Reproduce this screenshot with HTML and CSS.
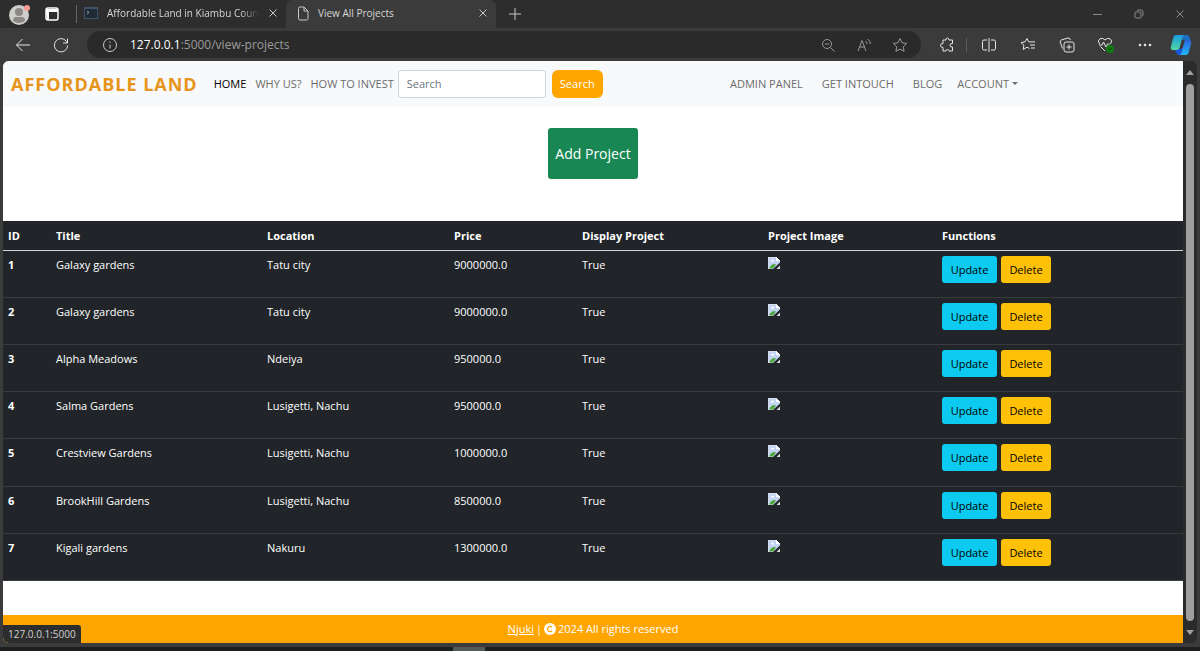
FILE: index.html
```html
<!DOCTYPE html>
<html lang="en">
<head>
    <meta charset="UTF-8">
    <title>View All Projects</title>
    <link rel="stylesheet" href="styles.css">
</head>
<body>
    <!-- shared shapes -->
    <svg class="defs" width="0" height="0">
        <symbol id="broken" viewBox="0 0 12 12">
            <path d="M0 0h8l4 4v8H0z" fill="#c3d3f3"/>
            <path d="M0 0h8l4 4v8H0z" fill="none" stroke="#e8e8e8"/>
            <path d="M8 0v4h4z" fill="#fff"/>
            <path d="M3 3.500q1.500-2 3 0v1H3z" fill="#fff"/>
            <path d="M1 11.500q3-6 7-4l-3 4z" fill="#4ea83c"/>
            <path d="M12 5.500L5 12h7z" fill="#212529"/>
            <path d="M12 8.500L8.500 12H12z" fill="#ddd"/>
        </symbol>
        <symbol id="close" viewBox="0 0 10 10">
            <path d="M1.500 1.500l7 7M8.500 1.500l-7 7"/>
        </symbol>
    </svg>

    <div class="tabs">
        <button class="avatar" aria-label="Profile">
            <svg width="24" height="22" viewBox="0 0 24 22">
                <circle cx="11" cy="12" r="10" fill="#d0cecb"/>
                <circle cx="11" cy="9" r="4" fill="#8b8986"/>
                <path d="M5 18q0-4 3-4h6q3 0 3 4-6 4-12 0z" fill="#8b8986"/>
                <circle cx="19" cy="5" r="3" fill="#fa9a94"/>
            </svg>
        </button>
        <button class="workspace" aria-label="Tab actions">
            <svg width="14" height="14" viewBox="0 0 14 14">
                <rect x="1" y="1" width="12" height="12" rx="2" fill="none" stroke="#fff" stroke-width="1.500"/>
                <path d="M1 2h12v3H1zM1 5h3v8H2z" fill="#fff"/>
            </svg>
        </button>
        <div class="tab">
            <svg width="14" height="12" viewBox="0 0 14 12">
                <rect x=".5" y=".5" width="13" height="11" fill="#202a36" stroke="#40526a"/>
                <path d="M1 1.500h12" stroke="#40526a"/>
                <path d="M3 4l2 1.500L3 7" fill="none" stroke="#999"/>
            </svg>
            <span class="tab-title faded">Affordable Land in Kiambu Coun</span>
            <button class="close" aria-label="Close tab"><svg class="line" width="10" height="10"><use href="#close"/></svg></button>
        </div>
        <div class="tab active">
            <svg class="line" width="12" height="15" viewBox="0 0 12 15">
                <path d="M1.500 2.500q0-1.500 1.500-1.500h4l4 4v7.500q0 1.500-1.500 1.500H3q-1.500 0-1.500-1.500zM7 1v4h4"/>
            </svg>
            <span class="tab-title">View All Projects</span>
            <button class="close" aria-label="Close tab"><svg class="line" width="10" height="10"><use href="#close"/></svg></button>
        </div>
        <button class="new-tab" aria-label="New tab">
            <svg class="line" width="14" height="14" viewBox="0 0 14 14"><path d="M7 1v12M1 7h12"/></svg>
        </button>
        <div class="window-buttons">
            <button aria-label="Minimize"><svg class="line" width="10" height="10" viewBox="0 0 10 10"><path d="M0 5.500h9"/></svg></button>
            <button aria-label="Restore"><svg class="line" width="10" height="10" viewBox="0 0 10 10"><rect x="1" y="3" width="6" height="6" rx="1"/><path d="M3 1.500q0-.5 1-.5h3q2 0 2 2v3q0 1-.5 1"/></svg></button>
            <button aria-label="Close"><svg class="line" width="10" height="10"><use href="#close"/></svg></button>
        </div>
    </div>

    <div class="toolbar">
        <button class="nav-button" aria-label="Back"><svg class="line bright" width="16" height="14" viewBox="0 0 16 14"><path d="M15 7H1.500M7.500 1l-6 6 6 6"/></svg></button>
        <button class="nav-button" aria-label="Reload"><svg class="line bright" width="16" height="16" viewBox="0 0 16 16"><path d="M14 5.500A6.600 6.600 0 1 0 14.600 8.500M14.500 1.500v4.500h-4.500"/></svg></button>
        <div class="address">
            <svg class="line" width="16" height="16" viewBox="0 0 16 16"><circle cx="8" cy="8" r="6.500"/><path d="M8 7.500v4M8 4.500v1.300"/></svg>
            <span class="url"><b>127.0.0.1</b>:5000/view-projects</span>
            <button aria-label="Zoom"><svg class="line" width="14" height="14" viewBox="0 0 14 14"><circle cx="6" cy="6" r="4.500"/><path d="M9.500 9.500l4 4M4 6h4"/></svg></button>
            <button aria-label="Read aloud"><svg class="line" width="16" height="14" viewBox="0 0 16 14"><path d="M2 13L6 2.500 10 13M3.500 9h5M9.500 3q1.500 1 1.500 3M11.500 1q3 2 3 5"/></svg></button>
            <button aria-label="Favorite"><svg class="line" width="16" height="16" viewBox="0 0 16 16"><path d="M8 1.500l2 4.200 4.700.7-3.400 3.300.8 4.600L8 12.100l-4.100 2.200.8-4.600L1.300 6.400 6 5.700z"/></svg></button>
        </div>
        <button aria-label="Extensions"><svg class="line bright" width="16" height="16" viewBox="0 0 16 16"><path d="M4 3h3q0-2 1.500-2T10 3h3.500v3.500q-2.500-.3-2.500 1.800t2.500 1.700V14H10q0-1.500-1.500-1.500T7 14H4v-3.500q-2.500 0-2.500-2T4 6.500z"/></svg></button>
        <span class="divider"></span>
        <button aria-label="Split screen"><svg class="line bright" width="16" height="16" viewBox="0 0 16 16"><path d="M8 1v14M6 3H3q-1.500 0-1.500 1.500v7Q1.500 13 3 13h3M10 3h3q1.500 0 1.500 1.500v7q0 1.500-1.500 1.500h-3"/></svg></button>
        <button aria-label="Favorites"><svg class="line bright" width="16" height="16" viewBox="0 0 16 16"><path d="M9.500 11.500L7 10.200l-3.800 2.300.7-4.300L1 5.500l4-.6L7 1.500l1.800 3.400h6.200M10 8h5M11 11h4"/></svg></button>
        <button aria-label="Collections"><svg class="line bright" width="16" height="16" viewBox="0 0 16 16"><rect x="5" y="5" width="10" height="10" rx="2"/><path d="M10 7.500v5M7.500 10h5M3.500 11.500L1.200 5q-.3-1.500 1-2L9 1q1.500-.3 2 1l.3 1"/></svg></button>
        <button aria-label="Browser essentials"><svg class="line bright" width="18" height="16" viewBox="0 0 18 16"><path d="M2.500 7Q0 3.500 3 1.700q3-1.200 5 1.300 2-2.500 5-1.300 3 1.800.5 5.300M3.500 9.500L8 14M2 8h3l1.500-3 2.500 5 1.500-3h2"/><circle cx="13" cy="12" r="4" fill="#107c10" stroke="none"/><path d="M11.200 12l1.300 1.300 2.300-2.500" stroke="#0a3d0a"/></svg></button>
        <button aria-label="Settings and more"><svg width="14" height="4" viewBox="0 0 14 4" fill="#e6e6e6"><circle cx="2" cy="2" r="1.300"/><circle cx="7" cy="2" r="1.300"/><circle cx="12" cy="2" r="1.300"/></svg></button>
        <button class="copilot" aria-label="Copilot">
            <svg width="22" height="20" viewBox="0 0 22 20">
                <defs>
                    <linearGradient id="cp1" x2="0" y2="1"><stop stop-color="#199be2"/><stop offset="1" stop-color="#4fd8a0"/></linearGradient>
                    <linearGradient id="cp2" x2="0" y2="1"><stop stop-color="#2c62d8"/><stop offset="1" stop-color="#22b8fa"/></linearGradient>
                </defs>
                <path d="M9 0h8q2 0 2.500 2l1 3H13z" fill="#1b6fc4"/>
                <path d="M4 14h7l3-2 1 6-2 2H9q-2 0-2.500-2z" fill="#1a55de"/>
                <path d="M6 0h9q-2 0-2.500 2L9.500 13q-.5 2-3 2H3q-3 0-2-4L3.500 2Q4 0 6 0z" fill="url(#cp1)"/>
                <path d="M15 5h4q3 0 2 4l-2.500 9q-.5 2-3 2H9q2 0 2.500-2L14 8q.5-3 1-3z" fill="url(#cp2)"/>
            </svg>
        </button>
    </div>

    <div class="viewport">
        <div class="page">
            <nav class="navbar">
                <a class="brand" href="#">AFFORDABLE LAND</a>
                <a class="current" href="#">HOME</a>
                <a href="#">WHY US?</a>
                <a href="#">HOW TO INVEST</a>
                <form class="search">
                    <input type="search" placeholder="Search" aria-label="Search">
                    <button type="button">Search</button>
                </form>
                <div class="nav-right">
                    <a href="#">ADMIN PANEL</a>
                    <a href="#">GET INTOUCH</a>
                    <a href="#">BLOG</a>
                    <a class="dropdown" href="#">ACCOUNT</a>
                </div>
            </nav>

            <div class="add">
                <button class="btn-add">Add Project</button>
            </div>

            <table class="projects">
                <colgroup>
                    <col class="c-id"><col class="c-title"><col class="c-location"><col class="c-price"><col class="c-display"><col class="c-image"><col>
                </colgroup>
                <thead>
                    <tr>
                        <th>ID</th>
                        <th>Title</th>
                        <th>Location</th>
                        <th>Price</th>
                        <th>Display Project</th>
                        <th>Project Image</th>
                        <th>Functions</th>
                    </tr>
                </thead>
                <tbody>
                    <tr>
                        <th>1</th>
                        <td>Galaxy gardens</td>
                        <td>Tatu city</td>
                        <td>9000000.0</td>
                        <td>True</td>
                        <td><svg class="thumb"><use href="#broken"/></svg></td>
                        <td><div class="actions"><button class="update">Update</button><button class="delete">Delete</button></div></td>
                    </tr>
                    <tr>
                        <th>2</th>
                        <td>Galaxy gardens</td>
                        <td>Tatu city</td>
                        <td>9000000.0</td>
                        <td>True</td>
                        <td><svg class="thumb"><use href="#broken"/></svg></td>
                        <td><div class="actions"><button class="update">Update</button><button class="delete">Delete</button></div></td>
                    </tr>
                    <tr>
                        <th>3</th>
                        <td>Alpha Meadows</td>
                        <td>Ndeiya</td>
                        <td>950000.0</td>
                        <td>True</td>
                        <td><svg class="thumb"><use href="#broken"/></svg></td>
                        <td><div class="actions"><button class="update">Update</button><button class="delete">Delete</button></div></td>
                    </tr>
                    <tr>
                        <th>4</th>
                        <td>Salma Gardens</td>
                        <td>Lusigetti, Nachu</td>
                        <td>950000.0</td>
                        <td>True</td>
                        <td><svg class="thumb"><use href="#broken"/></svg></td>
                        <td><div class="actions"><button class="update">Update</button><button class="delete">Delete</button></div></td>
                    </tr>
                    <tr>
                        <th>5</th>
                        <td>Crestview Gardens</td>
                        <td>Lusigetti, Nachu</td>
                        <td>1000000.0</td>
                        <td>True</td>
                        <td><svg class="thumb"><use href="#broken"/></svg></td>
                        <td><div class="actions"><button class="update">Update</button><button class="delete">Delete</button></div></td>
                    </tr>
                    <tr>
                        <th>6</th>
                        <td>BrookHill Gardens</td>
                        <td>Lusigetti, Nachu</td>
                        <td>850000.0</td>
                        <td>True</td>
                        <td><svg class="thumb"><use href="#broken"/></svg></td>
                        <td><div class="actions"><button class="update">Update</button><button class="delete">Delete</button></div></td>
                    </tr>
                    <tr>
                        <th>7</th>
                        <td>Kigali gardens</td>
                        <td>Nakuru</td>
                        <td>1300000.0</td>
                        <td>True</td>
                        <td><svg class="thumb"><use href="#broken"/></svg></td>
                        <td><div class="actions"><button class="update">Update</button><button class="delete">Delete</button></div></td>
                    </tr>
                </tbody>
            </table>

            <footer>
                <a href="#">Njuki</a>
                <span>|</span>
                <svg width="12" height="12" viewBox="0 0 12 12"><circle cx="6" cy="6" r="6" fill="#fff"/><path d="M8 4.200A2.600 2.600 0 1 0 8 7.800" fill="none" stroke="orange" stroke-width="1.300"/></svg>
                <span>2024 All rights reserved</span>
            </footer>

            <div class="status">127.0.0.1:5000</div>
        </div>
        <div class="scrollbar">
            <svg width="8" height="5" viewBox="0 0 8 5"><path d="M4 0l4 5H0z" fill="#9f9f9f"/></svg>
            <div class="scroll-thumb"></div>
            <svg width="8" height="5" viewBox="0 0 8 5"><path d="M4 5L0 0h8z" fill="#9f9f9f"/></svg>
        </div>
    </div>

    <div class="taskbar"><span class="task"></span></div>
</body>
</html>
```
FILE: styles.css
```css
* {
    box-sizing: border-box;
}

body {
    margin: 0;
    min-height: 100vh;
    display: flex;
    flex-direction: column;
    background: #3b3b3b;
    font-family: "Open Sans", "Noto Sans", sans-serif;
    font-size: 11px;
    line-height: 18px;
}

button {
    font: inherit;
    border: none;
    padding: 0;
    background: none;
    cursor: pointer;
}

a {
    color: inherit;
    text-decoration: none;
}

svg {
    display: block;
    flex: none;
}

.defs {
    position: absolute;
}

.line {
    fill: none;
    stroke: #c8c8c8;
}

.bright {
    stroke: #e6e6e6;
}

/* Tab strip */
.tabs {
    display: flex;
    align-items: center;
    height: 28px;
    background: #2d2d2d;
    color: #d6d6d6;
    font-size: 10px;
}

.avatar {
    margin-left: 8px;
}

.workspace {
    margin-left: 13px;
    margin-right: 17px;
}

.tab {
    display: flex;
    align-items: center;
    gap: 9px;
    height: 28px;
    width: 210px;
    padding: 0 8px 2px;
    position: relative;
}

.tab:not(.active)::before {
    content: "";
    position: absolute;
    left: 0;
    top: 5px;
    height: 18px;
    width: 1px;
    background: #666;
}

.tab.active {
    background: #3b3b3b;
    border-radius: 6px 6px 0 0;
    padding-left: 11px;
}

.tab-title {
    flex: 1;
    white-space: nowrap;
}

.faded {
    -webkit-mask-image: linear-gradient(to right, #000 88%, transparent);
    mask-image: linear-gradient(to right, #000 88%, transparent);
}

.new-tab {
    margin-left: 12px;
}

.window-buttons {
    display: flex;
    margin-left: auto;
}

.window-buttons button {
    width: 41px;
    display: flex;
    justify-content: center;
}

.window-buttons .line {
    stroke: #8b8b8b;
}

/* Toolbar */
.toolbar {
    display: flex;
    align-items: center;
    height: 33px;
    padding: 0 3px 0 4px;
}

.toolbar button {
    width: 39px;
    display: flex;
    justify-content: center;
}

.toolbar .nav-button {
    width: 38px;
}

.toolbar .copilot {
    width: 33px;
}

.address {
    flex: 1;
    display: flex;
    align-items: center;
    height: 27px;
    margin: 0 6px 0 7px;
    padding: 0 3px 0 15px;
    border-radius: 14px;
    background: #2a2a2a;
}

.address button {
    width: 36px;
}

.address button .line {
    stroke: #999;
}

.url {
    flex: 1;
    margin-left: 12px;
    color: #9a9a9a;
    font-size: 12px;
}

.url b {
    color: #fff;
    font-weight: 500;
}

.divider {
    width: 1px;
    height: 14px;
    margin-right: 2px;
    background: #5c5c5c;
}

/* Page */
.viewport {
    flex: 1;
    display: flex;
    padding: 0 3px;
}

.page {
    flex: 1;
    display: flex;
    flex-direction: column;
    position: relative;
    background: #fff;
    border-radius: 6px 0 0 6px;
    overflow: hidden;
}

.navbar {
    display: flex;
    align-items: center;
    gap: 9px;
    height: 45px;
    padding: 0 8px;
    background: #f8f9fa;
    color: #6b6c6d;
}

.brand {
    margin-right: 7px;
    color: #e6951a;
    font-size: 18px;
    font-weight: 700;
    letter-spacing: 1px;
}

.current {
    color: #000;
}

.search {
    display: flex;
    gap: 6px;
    margin-left: -5px;
}

.search input {
    width: 148px;
    height: 28px;
    padding: 0 8px;
    border: 1px solid #ced4da;
    border-radius: 3px;
    font: inherit;
}

.search input::placeholder {
    color: #6c757d;
}

.search button {
    width: 51px;
    height: 28px;
    border-radius: 6px;
    background: orange;
    color: #fff;
}

.nav-right {
    display: flex;
    gap: 19px;
    margin-left: auto;
    margin-right: 157px;
}

.dropdown {
    margin-left: -4px;
}

.dropdown::after {
    content: "";
    display: inline-block;
    margin-left: 3px;
    vertical-align: 3px;
    border-top: 3px solid;
    border-left: 3px solid transparent;
    border-right: 3px solid transparent;
}

.add {
    display: flex;
    justify-content: center;
    padding: 22px 0 42px;
}

.btn-add {
    height: 51px;
    padding: 0 7px;
    border-radius: 3px;
    background: #198754;
    color: #fff;
    font-size: 14px;
}

/* Projects table */
.projects {
    width: 100%;
    height: 360px;
    table-layout: fixed;
    border-collapse: collapse;
    background: #212529;
    color: #fff;
}

.c-id { width: 48px; }
.c-title { width: 211px; }
.c-location { width: 187px; }
.c-price { width: 128px; }
.c-display { width: 186px; }
.c-image { width: 174px; }

.projects th,
.projects td {
    padding: 5px;
    text-align: left;
    vertical-align: top;
    border-bottom: 1px solid #373b3e;
}

.projects thead th {
    height: 29px;
    padding: 6px 5px 4px;
    border-bottom: 1px solid #d0d1d2;
}

.thumb {
    width: 12px;
    height: 12px;
    margin-top: 1px;
}

.actions {
    display: flex;
    gap: 4px;
}

.actions button {
    height: 27px;
    padding-top: 1px;
    border-radius: 3px;
    color: #000;
}

.actions .update {
    width: 55px;
    background: #0dcaf0;
}

.actions .delete {
    width: 50px;
    background: #ffc107;
}

footer {
    display: flex;
    align-items: center;
    justify-content: center;
    gap: 2px;
    height: 28px;
    margin-top: auto;
    background: orange;
    color: #fff;
}

footer a {
    text-decoration: underline;
}

/* Link target shown over the page corner */
.status {
    position: absolute;
    left: 0;
    bottom: 0;
    padding: 0 5px;
    border-top-right-radius: 3px;
    background: #2d2d2d;
    color: #d0d0d0;
    font-size: 10px;
}

.scrollbar {
    width: 14px;
    display: flex;
    flex-direction: column;
    align-items: center;
    gap: 9px;
    padding: 9px 3px 8px;
    background: #2b2b2b;
    border-radius: 0 6px 6px 0;
}

.scroll-thumb {
    flex: 1;
    width: 8px;
    border-radius: 4px;
    background: #9f9f9f;
}

.taskbar {
    height: 8px;
    border-top: 4px solid #3b3b3b;
    background: #1c2021;
}

.task {
    display: block;
    width: 32px;
    height: 4px;
    margin-left: 453px;
    background: #555a5a;
}
```
